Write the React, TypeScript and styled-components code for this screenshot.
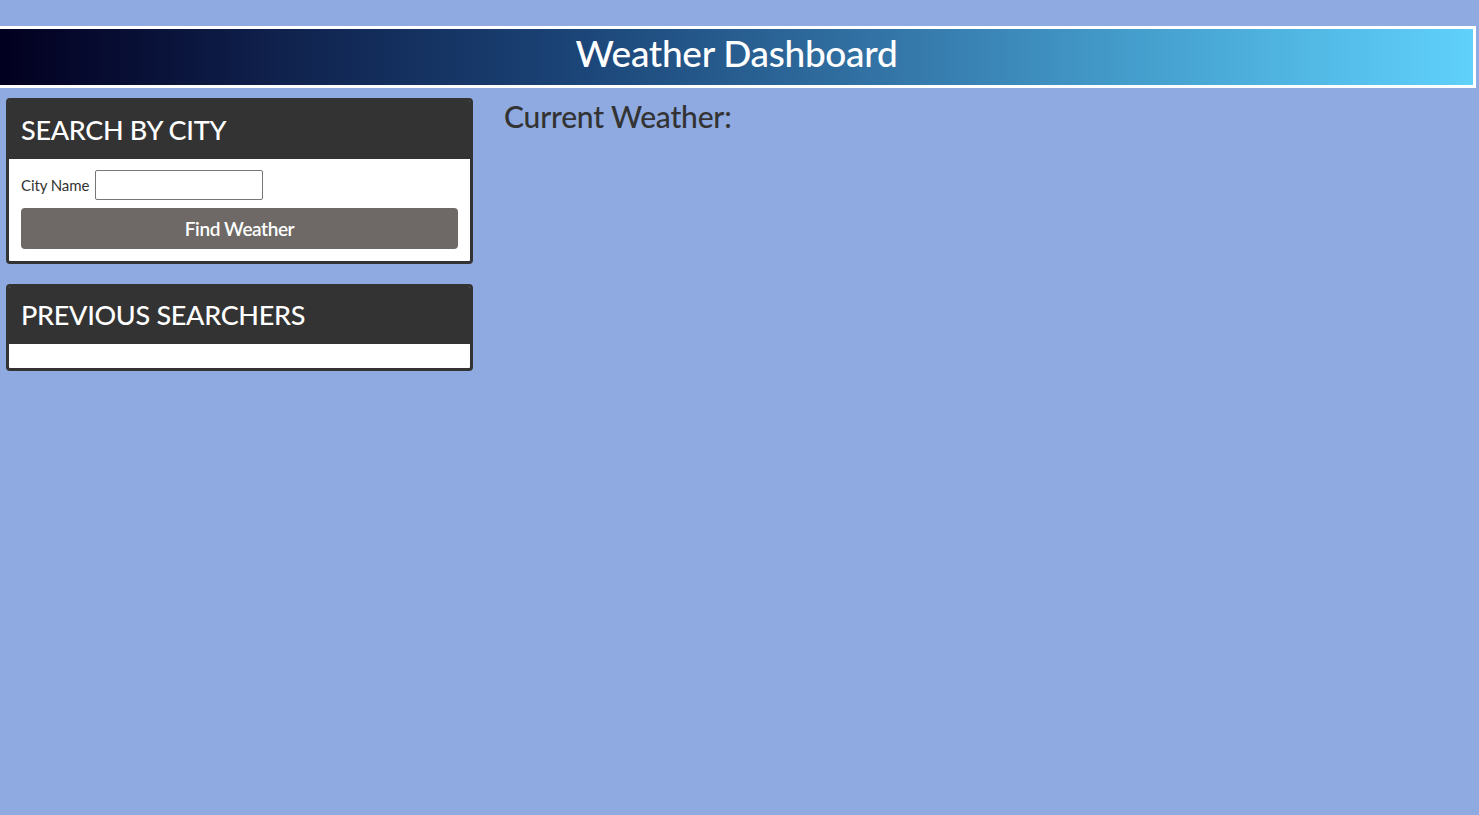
import React from "react";
import styled, { createGlobalStyle } from "styled-components";

const Global = createGlobalStyle`
  html, body { margin: 0; padding: 0; }
  body {
    background: #8eaae0;
    font-family: Lato, "Open Sans", "Liberation Sans", sans-serif;
    color: #333333;
    min-height: 815px;
  }
  * { box-sizing: border-box; }
`;

const Page = styled.div`
  padding-top: 26px;
`;

const Header = styled.header`
  width: 1476px;
  height: 62px;
  border: 3px solid #ffffff;
  border-left: none;
  background: linear-gradient(
    to right,
    #020020 0%,
    #080f35 9%,
    #10234f 20%,
    #1a4275 38%,
    #3374a6 60%,
    #4299c8 75%,
    #5fd1fb 100%
  );
  display: flex;
  align-items: center;
  justify-content: center;
  padding-bottom: 8px;
`;

const Title = styled.h1`
  margin: 0;
  color: #ffffff;
  font-size: 37px;
  font-weight: 500;
  letter-spacing: -0.3px;
  line-height: 1.2;
`;

const Layout = styled.div`
  display: flex;
  align-items: flex-start;
  padding: 10px 0 0 6px;
`;

const Sidebar = styled.aside`
  width: 467px;
  display: flex;
  flex-direction: column;
  gap: 20px;
`;

const Card = styled.section`
  border: 3px solid #333333;
  border-radius: 4px;
  background: #ffffff;
  overflow: hidden;
`;

const CardHeader = styled.div<{ $short?: boolean }>`
  background: #333333;
  height: ${(p) => (p.$short ? "57px" : "58px")};
  padding: 0 0 0 12px;
  display: flex;
  align-items: center;
`;

const CardTitle = styled.h2`
  margin: 0;
  color: #ffffff;
  font-size: 27px;
  font-weight: 500;
  letter-spacing: -0.3px;
  line-height: 1.2;
`;

const CardBody = styled.div<{ $empty?: boolean }>`
  padding: ${(p) => (p.$empty ? "24px 12px 0" : "11px 12px 12px")};
`;

const FieldRow = styled.div`
  display: flex;
  align-items: center;
  gap: 6px;
  margin-bottom: 8px;
`;

const Label = styled.label`
  font-size: 15px;
  color: #333333;
  letter-spacing: -0.1px;
`;

const Input = styled.input`
  width: 168px;
  height: 30px;
  border: 1px solid #767676;
  border-radius: 2px;
  padding: 0 4px;
  font-size: 15px;
`;

const Button = styled.button`
  width: 100%;
  height: 41px;
  border: none;
  border-radius: 4px;
  background: #6e6966;
  color: #ffffff;
  font-family: inherit;
  font-size: 19px;
  font-weight: 600;
  letter-spacing: -0.4px;
  cursor: pointer;
`;

const Main = styled.main`
  flex: 1;
  padding-left: 31px;
`;

const SubTitle = styled.h3`
  margin: 0;
  font-size: 30px;
  font-weight: 500;
  color: #333333;
  letter-spacing: -0.2px;
  line-height: 1.2;
`;

export default function App() {
  return (
    <Page>
      <Global />
      <Header>
        <Title>Weather Dashboard</Title>
      </Header>
      <Layout>
        <Sidebar>
          <Card>
            <CardHeader>
              <CardTitle>SEARCH BY CITY</CardTitle>
            </CardHeader>
            <CardBody>
              <FieldRow>
                <Label htmlFor="city">City Name</Label>
                <Input id="city" type="text" />
              </FieldRow>
              <Button type="button">Find Weather</Button>
            </CardBody>
          </Card>
          <Card>
            <CardHeader $short>
              <CardTitle>PREVIOUS SEARCHERS</CardTitle>
            </CardHeader>
            <CardBody $empty />
          </Card>
        </Sidebar>
        <Main>
          <SubTitle>Current Weather:</SubTitle>
        </Main>
      </Layout>
    </Page>
  );
}
